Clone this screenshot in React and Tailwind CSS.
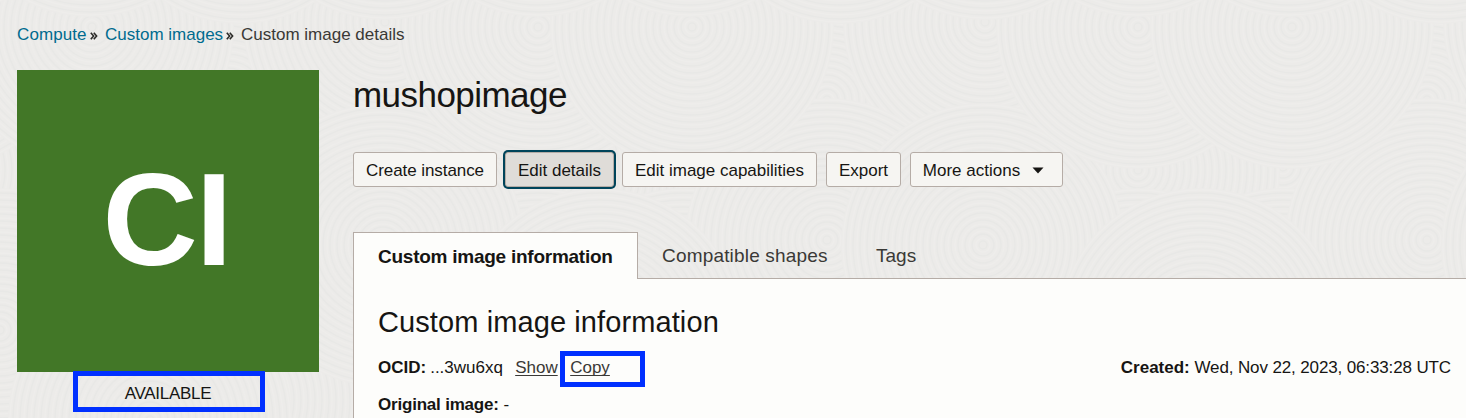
// One 600px-wide tile of overlapping ripple disks, listed back to front.
const DISKS = [
  [227, 400], [83, 167], [538, 170], [227, 100], [83, 330], [538, 330],
  [385, 22], [227, 240], [383, 245], [538, 27], [92, 27], [90, -125], [240, -118], [385, -122], [538, -125],
  [0, 330], [150, 420],
];
const TILES = [-600, 0, 600, 1200];
const RINGS = [4, 11, 18, 25, 32, 39, 46, 53, 60, 67, 74, 81, 88, 95, 102, 109, 116, 123, 130, 137];

function Backdrop() {
  return (
    <svg className="absolute inset-0 h-full w-full" viewBox="0 0 1466 418" fill="none" aria-hidden="true">
      {DISKS.map(([x, y]) =>
        TILES.map((t) => (
          <g key={`${x},${y},${t}`}>
            <circle cx={x + t} cy={y} r="142" fill="#ecebe9" />
            {RINGS.map((r) => (
              <g key={r}>
                <circle cx={x + t} cy={y} r={r} stroke="#e8e8e6" strokeWidth="1.4" />
                <circle cx={x + t} cy={y} r={r + 3} stroke="#eeedeb" strokeWidth="1.4" />
              </g>
            ))}
          </g>
        ))
      )}
    </svg>
  );
}

function Button({ children, className }) {
  return (
    <button className={`flex h-[35px] shrink-0 items-center justify-center whitespace-nowrap rounded-[3px] border border-[#b5aca6] pt-[3px] text-[17px] text-[#161513] ${className}`}>
      {children}
    </button>
  );
}

function Chevrons() {
  return (
    <svg className="ml-[3px] mt-[2px] shrink-0" width="8" height="8" viewBox="0 0 8 8" fill="none" stroke="#2b2a28" strokeWidth="1.6">
      <path d="M.8.8 3.6 4 .8 7.2M3.8.8 6.6 4 3.8 7.2" />
    </svg>
  );
}

export default function App() {
  return (
    <div className="relative h-[418px] w-[1466px] overflow-hidden bg-[#ecebe9] font-['Liberation_Sans',Arial,sans-serif] text-[17px] leading-5 text-[#161513]">
      <Backdrop />
      <div className="relative flex h-full flex-col">
        <nav className="flex h-[70px] shrink-0 items-center whitespace-nowrap pl-[17px] text-[#006b8f]">
          <a className="w-[70px] tracking-[0.1px]">Compute</a>
          <Chevrons />
          <a className="ml-[7px] w-[118px]">Custom images</a>
          <Chevrons />
          <span className="ml-[7px] text-[#3a3936]">Custom image details</span>
        </nav>
        <div className="flex min-h-0 flex-1">
          <aside className="flex w-[353px] shrink-0 flex-col pl-[17px]">
            <div className="flex h-[302px] w-[302px] shrink-0 items-center justify-center bg-[#427727] pb-0.5 pr-[3px] text-[132px] font-bold leading-none tracking-[-2px] text-white">
              CI
            </div>
            <div className="-mt-px ml-14 flex h-[41px] w-48 shrink-0 items-center justify-center border-[5px] border-[#0030ff] pr-0.5 pt-[5px] tracking-[-0.3px]">
              AVAILABLE
            </div>
          </aside>
          <main className="flex min-w-0 flex-1 flex-col">
            <h1 className="mt-[5px] h-[77px] text-[35px] leading-[40px] tracking-[-0.55px]">mushopimage</h1>
            <div className="flex">
              <Button className="w-36 bg-[#f6f5f2] tracking-[-0.07px]">Create instance</Button>
              <Button className="ml-2 w-[109px] bg-[#dfdcd8] ring-2 ring-[#00445a]">Edit details</Button>
              <Button className="ml-2 w-[195px] bg-[#f6f5f2]">Edit image capabilities</Button>
              <Button className="ml-[9px] w-[75px] bg-[#f6f5f2]">Export</Button>
              <Button className="ml-[9px] w-[153px] bg-[#f6f5f2]">
                More actions
                <svg className="mb-0.5 ml-3 mr-1.5" width="12" height="7" viewBox="0 0 12 7" fill="#161513">
                  <path d="M.5.5h11L6 6.5z" />
                </svg>
              </Button>
            </div>
            <div className="mt-[45px] flex h-[47px] shrink-0 whitespace-nowrap text-[19px]">
              <div className="flex w-[285px] items-center border border-b-0 border-[#b5aca6] bg-[#fdfdfb] pl-6 pt-0.5 font-bold tracking-[-0.25px]">
                Custom image information
              </div>
              <div className="flex flex-1 items-center border-b border-[#b5aca6] pl-6 pt-0.5 text-[#3a3936]">
                <span className="w-[214px] tracking-[0.18px]">Compatible shapes</span>
                <span>Tags</span>
              </div>
            </div>
            <section className="flex-1 border-l border-[#b5aca6] bg-[#fdfdfb] pl-6">
              <h2 className="pt-[27px] text-[29px] leading-8 tracking-[0.1px]">Custom image information</h2>
              <div className="mt-[13px] flex h-9 items-center whitespace-nowrap">
                <b className="-mt-0.5">OCID:</b>
                <span className="-mt-0.5 ml-1 w-[73px]">...3wu6xq</span>
                <a className="-mt-0.5 ml-3 w-[42px] text-[#3a3936] underline decoration-1 underline-offset-2 [text-decoration-skip-ink:none]">Show</a>
                <div className="ml-[3px] flex h-9 w-[85px] items-center border-[5px] border-[#0030ff] pb-0.5 pl-[5px]">
                  <a className="text-[#3a3936] underline decoration-1 underline-offset-2 [text-decoration-skip-ink:none]">Copy</a>
                </div>
                <span className="-mt-0.5 ml-auto mr-[15px]"><b>Created:</b> <span className="tracking-[-0.13px]">Wed, Nov 22, 2023, 06:33:28 UTC</span></span>
              </div>
              <div className="mt-2"><b className="tracking-[-0.2px]">Original image:</b> <span>-</span></div>
            </section>
          </main>
        </div>
      </div>
    </div>
  );
}
